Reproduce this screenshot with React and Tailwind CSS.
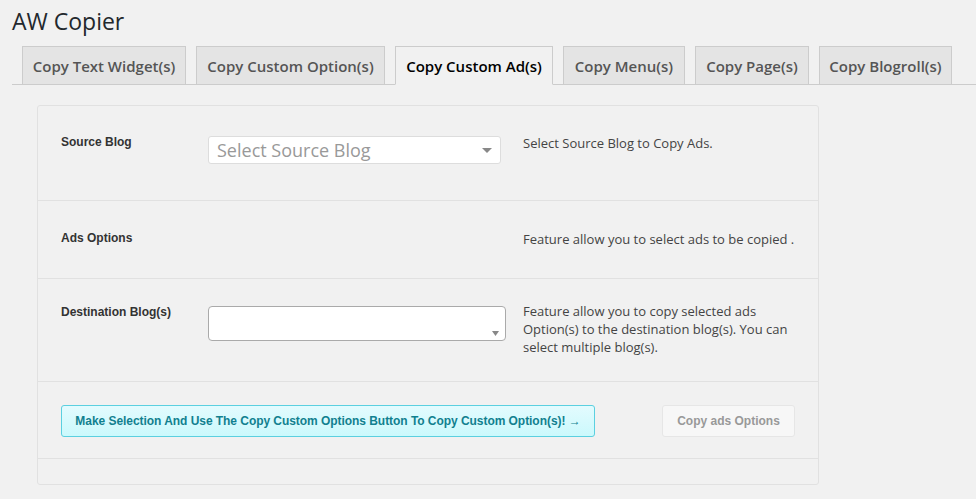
const tabs = [
  { name: "Copy Text Widget(s)", w: "w-[164px]" },
  { name: "Copy Custom Option(s)", w: "w-[189px]" },
  { name: "Copy Custom Ad(s)", w: "w-[158px]" },
  { name: "Copy Menu(s)", w: "w-[122px]" },
  { name: "Copy Page(s)", w: "w-[114px]" },
  { name: "Copy Blogroll(s)", w: "w-[133px]" },
]

const sans = "font-['Open_Sans',sans-serif]"
const arial = "font-['Liberation_Sans',Arial,sans-serif]"

function Row({ label, children, desc, className = "" }) {
  return (
    <div className={`flex border-b border-[#e1e1e1] pl-[23px] ${className}`}>
      <div className={`w-[147px] shrink-0 text-[12px] font-bold text-[#333] ${arial}`}>{label}</div>
      <div className="w-[315px] shrink-0">{children}</div>
      <div className={`w-[280px] text-[13px] leading-[18px] text-[#444] ${sans}`}>{desc}</div>
    </div>
  )
}

export default function App() {
  return (
    <div className={`min-h-[499px] bg-[#f1f1f1] ${sans}`}>
      <h1 className="pl-3 pt-[6px] text-[23px] leading-[30px] text-[#23282d]">AW Copier</h1>

      <div className="ml-3 mt-[10px] flex gap-[10px] border-b border-[#ccc] pl-[10px]">
        {tabs.map((tab) => {
          const active = tab.name === "Copy Custom Ad(s)"
          return (
            <div
              key={tab.name}
              className={`-mb-px h-[39px] ${tab.w} border pt-[9px] text-center text-[15px] font-semibold leading-[20px] ${
                active
                  ? "border-[#ccc] border-b-[#f1f1f1] bg-[#f1f1f1] text-black"
                  : "border-[#ccc] bg-[#e4e4e4] text-[#555]"
              }`}
            >
              {tab.name}
            </div>
          )
        })}
      </div>

      <div className="ml-[37px] mt-5 w-[782px] rounded-[3px] border border-[#e1e1e1]">
        <Row
          label="Source Blog"
          className="h-[95px] pt-[27px]"
          desc={<div className="pt-[1px]">Select Source Blog to Copy Ads.</div>}
        >
          <div className="mt-[3px] flex h-[28px] w-[293px] items-center justify-between rounded-[3px] border border-[#ddd] bg-white pl-2 pr-2">
            <span className="text-[18px] text-[#999]">Select Source Blog</span>
            <svg width="10" height="5" viewBox="0 0 10 5">
              <path d="M0 0 L10 0 L5 5 Z" fill="#888" />
            </svg>
          </div>
        </Row>

        <Row
          label="Ads Options"
          className="h-[78px] pt-[28px]"
          desc={<div className="pt-[1px]">Feature allow you to select ads to be copied .</div>}
        />

        <Row
          label="Destination Blog(s)"
          className="h-[103px] pt-[24px]"
          desc={
            <div className="-mt-[1px]">
              Feature allow you to copy selected ads Option(s) to the destination blog(s). You can select multiple blog(s).
            </div>
          }
        >
          <div className="relative mt-[3px] h-[35px] w-[298px] rounded-[4px] border border-[#aaa] bg-white">
            <svg className="absolute bottom-[4px] right-[6px]" width="7" height="5" viewBox="0 0 7 5">
              <path d="M0 0 L7 0 L3.5 5 Z" fill="#888" />
            </svg>
          </div>
        </Row>

        <div className="flex h-[77px] items-start border-b border-[#e1e1e1] pl-[23px] pt-[23px]">
          <div
            className={`flex h-[32px] w-[534px] items-center justify-center rounded-[3px] border border-[#5bd0e0] bg-gradient-to-b from-[#e3fbfe] to-[#cbf9fc] text-[12px] font-bold tracking-[-0.05px] text-[#11808f] ${arial}`}
          >
            Make Selection And Use The Copy Custom Options Button To Copy Custom Option(s)! →
          </div>
          <div
            className={`ml-[67px] flex h-[32px] w-[133px] items-center justify-center rounded-[3px] border border-[#e6e6e6] bg-[#f7f7f7] text-[12px] font-bold text-[#999] ${arial}`}
          >
            Copy ads Options
          </div>
        </div>

        <div className="h-[25px]" />
      </div>
    </div>
  )
}
